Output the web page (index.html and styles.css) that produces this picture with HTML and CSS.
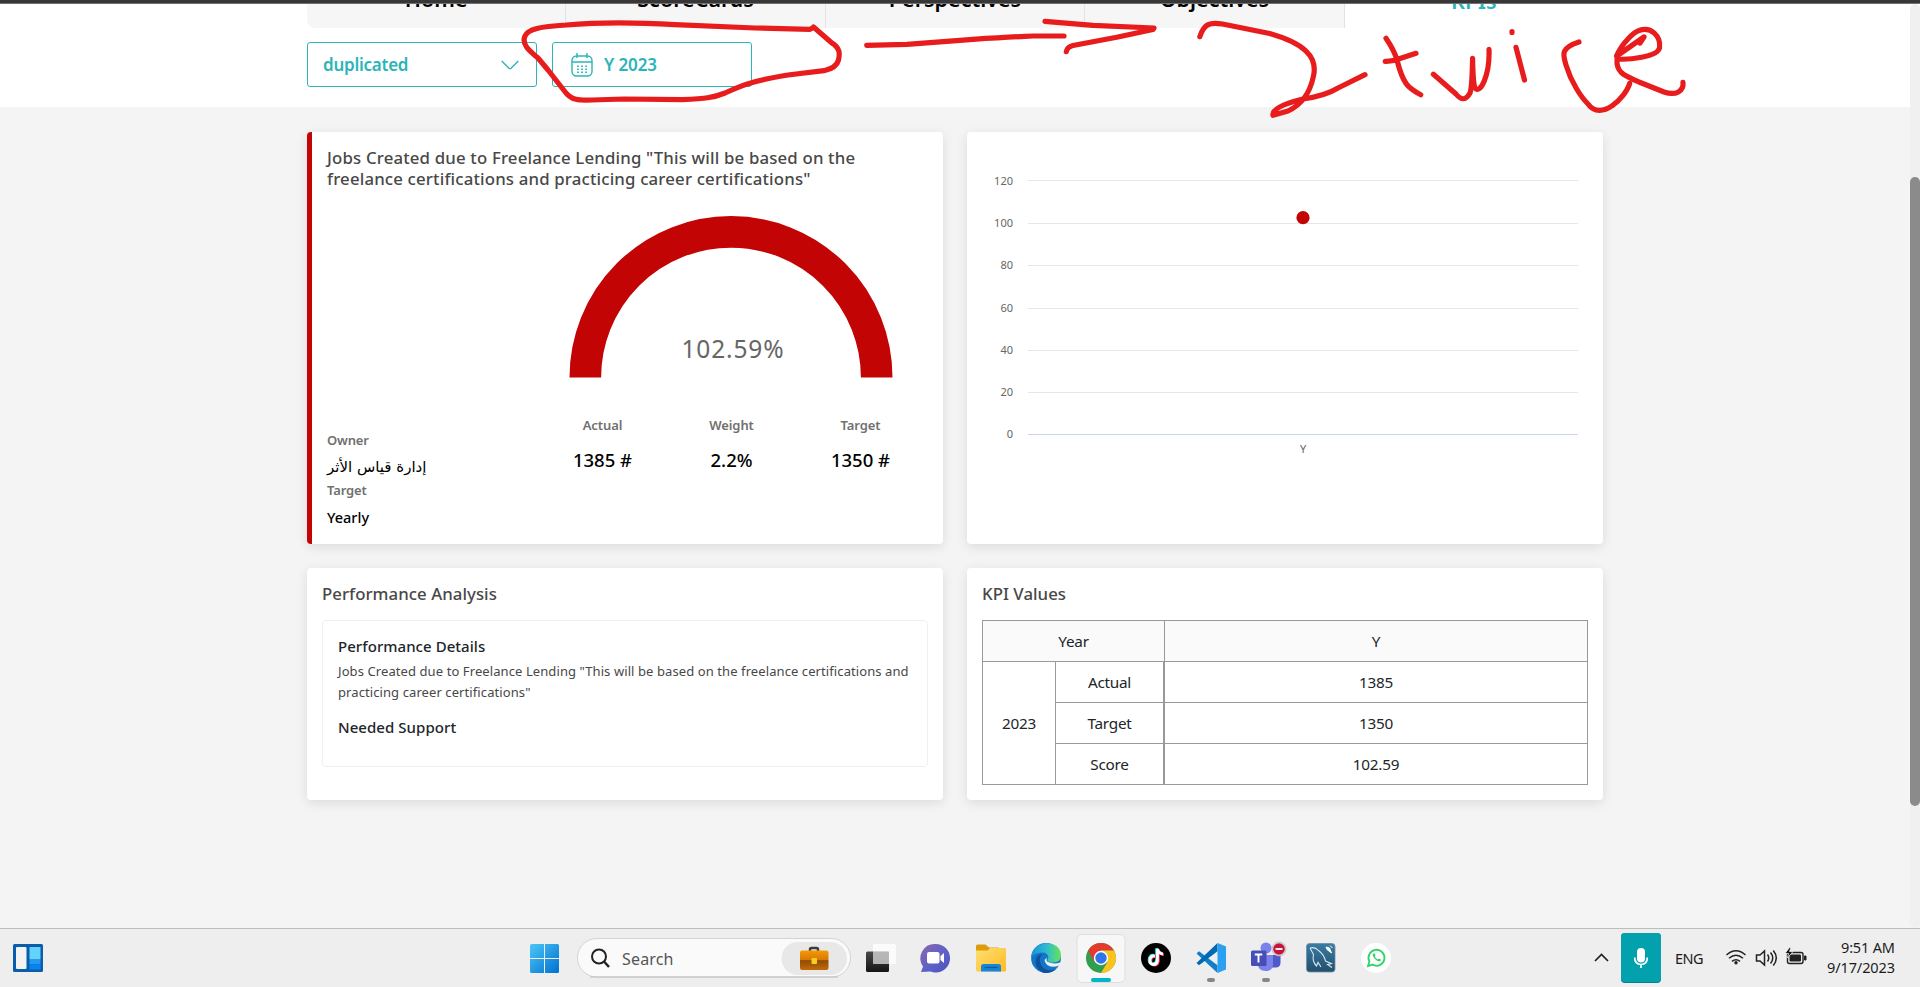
FILE: index.html
```
<!DOCTYPE html>
<html lang="en">
<head>
<meta charset="utf-8">
<title>KPIs</title>
<link rel="stylesheet" href="styles.css">
</head>
<body>
<div class="topbar"></div>
<header class="head">
  <nav class="tabs">
    <div class="tab"><span>Home</span></div>
    <div class="tab"><span>ScoreCards</span></div>
    <div class="tab"><span>Perspectives</span></div>
    <div class="tab"><span>Objectives</span></div>
    <div class="tab tab-on"><span>KPIs</span></div>
  </nav>
  <div class="filters">
    <div class="select"><span>duplicated</span>
      <svg width="18" height="10" viewBox="0 0 18 10" fill="none" stroke="#2cb5b9" stroke-width="1.4"><path d="M.7 1 8 8.2Q9 9 10 8.2L17.3 1"/></svg>
    </div>
    <div class="period">
      <svg width="22" height="24" viewBox="0 0 22 24" fill="none" stroke="#2cb5b9" stroke-width="1.4"><rect x="1" y="3" width="20" height="20" rx="4.5"/><path d="M1 9h20M6 0v5M16 0v5" /><path d="M6 13.2h10M6 16.2h10M6 19.2h10" stroke-width="1.6" stroke-dasharray="1.8 2.3"/></svg>
      <span>Y 2023</span>
    </div>
  </div>
</header>

<main class="grid">
  <section class="card kpi">
    <h2 class="title title-long">Jobs Created due to Freelance Lending "This will be based on the<br>freelance certifications and practicing career certifications"</h2>
    <div class="kpi-body">
      <dl class="meta">
        <dt>Owner</dt><dd class="ar" dir="rtl">إدارة قياس الأثر</dd>
        <dt>Target</dt><dd>Yearly</dd>
      </dl>
      <div class="score">
        <svg class="gauge" width="324" height="162" viewBox="0 0 324 162"><path d="M16.3 161.500A145.7 145.7 0 0 1 307.700 161.500" fill="none" stroke="#c30404" stroke-width="31.600"/><text x="163.500" y="141.500" text-anchor="middle" textLength="102" lengthAdjust="spacing" class="pct">102.59%</text></svg>
        <div class="stats">
          <div class="stat"><span>Actual</span><b>1385 #</b></div>
          <div class="stat"><span>Weight</span><b>2.2%</b></div>
          <div class="stat"><span>Target</span><b>1350 #</b></div>
        </div>
      </div>
    </div>
  </section>

  <section class="card">
    <svg class="chart" width="636" height="412" viewBox="0 0 636 412">
      <g stroke="#e6e6e6"><path d="M61 48.500H611M61 91.500H611M61 133.500H611M61 176.500H611M61 218.500H611M61 260.500H611"/></g>
      <path d="M61 302.500H611" stroke="#ccd6eb"/>
      <g class="axis" text-anchor="end">
        <text x="46" y="53">120</text><text x="46" y="95">100</text><text x="46" y="137">80</text><text x="46" y="180">60</text><text x="46" y="222">40</text><text x="46" y="264">20</text><text x="46" y="306">0</text>
      </g>
      <text class="axis" x="336" y="321" text-anchor="middle">Y</text>
      <circle cx="336" cy="85.700" r="6.600" fill="#c30404"/>
    </svg>
  </section>

  <section class="card panel">
    <h2 class="title">Performance Analysis</h2>
    <div class="box">
      <h3>Performance Details</h3>
      <p>Jobs Created due to Freelance Lending "This will be based on the freelance certifications and<br>practicing career certifications"</p>
      <h3>Needed Support</h3>
    </div>
  </section>

  <section class="card panel">
    <h2 class="title">KPI Values</h2>
    <div class="table">
      <div class="cell th year">Year</div><div class="cell th">Y</div>
      <div class="cell y23">2023</div>
      <div class="cell thick">Actual</div><div class="cell">1385</div>
      <div class="cell thick">Target</div><div class="cell">1350</div>
      <div class="cell thick">Score</div><div class="cell">102.59</div>
    </div>
  </section>
</main>

<div class="track"><div class="thumb"></div></div>

<svg class="ink" width="1920" height="130" viewBox="0 0 1920 130" fill="none" stroke="#e81c1c" stroke-width="5.200" stroke-linecap="round" stroke-linejoin="round">
  <path d="M813.500 27.500 810 29.300 755 28 675 24.700C640 22.500 600 22 566 25 540 26.500 528 29 525 36 521 45 531 52 538 58L548 70 566 93C572 100 578 100.500 592 100L624 99 682 99.700C705 98.500 713 98 725 93 748 82 760 80 788 75L824 70.700C832 69 837 66 838.500 60 840 53 840 48 831.600 42.700L813.500 27"/>
  <path d="M866.700 45.300 907 44.300 973 39.300Q1010 37 1033 36H1064"/>
  <path d="M1045 21.300 1093 25.300 1154 28 1153 29.500 1116.700 37.300 1073 45.500Q1067 47 1066.300 51.700"/>
  <path d="M1199.800 36.700C1204 24 1209 22 1222.500 24L1269.700 33.500C1303 43 1318 56 1313.500 76 1310 93 1301 105 1288 111L1273 115.300Q1271 107 1302.700 99 1325 96 1338 88L1365 74.700"/>
  <path d="M1386 38.300Q1394 50 1397 60C1403 84 1408 88 1420.700 94.700M1385.300 61.300Q1393 61.500 1400 58.500L1416 53.300"/>
  <path d="M1433.400 74.300 1456 94Q1464 104 1470 93 1472 88 1472.600 58.300 1473 83 1475 88C1480 95 1490 75 1489 49.300M1516 47.300 1524.500 80M1512 31.600v.800"/>
  <path d="M1579 42C1560 48 1563 55 1566 65 1571 82 1581 97 1588 104 1601 122 1626 97 1629.700 83.300"/>
  <path d="M1640 43 1644 37 1621 53 1616.500 56C1622 43 1634 32 1639 30.500 1651 26 1661 36 1659.500 48 1657.500 57 1628 60 1617 59 1616 72 1623 75 1639 82L1664 92C1676 96 1684 91 1683 82.300"/>
</svg>

<footer class="taskbar">
  <svg width="1920" height="59" viewBox="0 929 1920 59">
    <defs>
      <linearGradient id="win" x1="0" y1="0" x2="1" y2="1"><stop offset="0" stop-color="#4cc7f7"/><stop offset="1" stop-color="#0070cf"/></linearGradient>
      <linearGradient id="dark" x1="0" y1="0" x2="0" y2="1"><stop offset="0" stop-color="#4a4a4a"/><stop offset="1" stop-color="#151515"/></linearGradient>
      <linearGradient id="chat" x1="0" y1="0" x2="1" y2="1"><stop offset="0" stop-color="#8a68ae"/><stop offset=".6" stop-color="#5b5fc9"/><stop offset="1" stop-color="#4f52b8"/></linearGradient>
      <linearGradient id="fold" x1="0" y1="0" x2="1" y2="1"><stop offset="0" stop-color="#ffdf74"/><stop offset="1" stop-color="#fdbb22"/></linearGradient>
      <linearGradient id="edge" x1="0" y1="0" x2="1" y2="0"><stop offset="0" stop-color="#1692d8"/><stop offset=".5" stop-color="#2dbbd0"/><stop offset="1" stop-color="#67e45a"/></linearGradient>
      <linearGradient id="case" x1="0" y1="0" x2="0" y2="1"><stop offset="0" stop-color="#f39a08"/><stop offset=".48" stop-color="#d97803"/><stop offset=".52" stop-color="#8f4b05"/><stop offset="1" stop-color="#c46a08"/></linearGradient>
      <linearGradient id="sql" x1="0" y1="0" x2="0" y2="1"><stop offset="0" stop-color="#3a7ca5"/><stop offset="1" stop-color="#234f6b"/></linearGradient>
    </defs>
    <!-- widgets -->
    <rect x="13" y="944" width="30" height="28" rx="1.500" fill="#0b5cab"/><rect x="16" y="947" width="10.500" height="22" rx="1" fill="#f3f3f3"/><rect x="29.500" y="947" width="11" height="12.500" fill="#63d3fb"/><rect x="29.500" y="960" width="11" height="4.500" fill="#2299f2"/><rect x="29.500" y="965" width="11" height="4.500" fill="#0583f0"/>
    <!-- start -->
    <path fill="url(#win)" d="M531.500 944H544v14h-14v-12.500q0-1.500 1.500-1.500ZM545 944h12.500q1.500 0 1.500 1.500V958h-14ZM530 959h14v14h-12.500q-1.500 0-1.500-1.500ZM545 959h14v12.500q0 1.500-1.500 1.500H545Z"/>
    <!-- search -->
    <rect x="577.500" y="938.500" width="273" height="38.500" rx="19.200" fill="#fafafa" stroke="#d4d4d4"/><path d="M590 977h248" stroke="#bdbdbd"/>
    <circle cx="599" cy="956.500" r="7" fill="none" stroke="#222" stroke-width="2"/><path d="m604 961.500 5 5.500" stroke="#222" stroke-width="2.500"/>
    <text x="622" y="965" class="tb-search" textLength="51.500">Search</text>
    <rect x="781.500" y="942" width="65.500" height="33" rx="16.500" fill="#e8e8e8"/>
    <path d="M810 951v-1.500q0-1.500 1.500-1.500h5q1.500 0 1.500 1.500v1.500" fill="none" stroke="#3d3a3a" stroke-width="2.500"/><rect x="800" y="950.500" width="28.500" height="19.500" rx="2" fill="url(#case)"/><rect x="811.500" y="958" width="5.500" height="6" rx="1" fill="#f4cf20"/>
    <!-- task view -->
    <rect x="866" y="951.500" width="23" height="20.500" rx="1.500" fill="url(#dark)"/><rect x="873" y="944" width="23" height="20" rx="1.500" fill="#fff" fill-opacity=".78"/><rect x="873" y="951.500" width="16" height="12.500" fill="#aaa" fill-opacity=".7"/>
    <!-- chat -->
    <path d="M935.500 944a14.300 14.300 0 1 1-5 27.600L921 972l2-5.500A14.300 14.300 0 0 1 935.500 944Z" fill="url(#chat)"/><rect x="927" y="952" width="12.500" height="11.500" rx="2" fill="#fff"/><path d="m940.500 956 3.500-3v10l-3.500-3Z" fill="#fff"/>
    <!-- folder -->
    <path d="M976 946q0-1.500 1.500-1.500h8l3.500 3h9q1.500 0 1.500 1.500v5H976Z" fill="#dc9c0c"/><path d="M976 950.500h11.500l3-2.500h14q1.500 0 1.500 1.500v20.500q0 1.500-1.500 1.500h-27q-1.500 0-1.500-1.500Z" fill="url(#fold)"/><path d="M981 971.500v-5q0-2.500 2.500-2.500h15q2.500 0 2.500 2.500v5Z" fill="#1784dc"/><path d="M984.500 967.500h13" stroke="#0d5aa7" stroke-width="1.300"/>
    <!-- edge -->
    <circle cx="1046" cy="958" r="14.900" fill="#1275c8"/><path d="M1031.200 956.500C1034 938 1061 940 1061 955q0 7.500-8 7.500c-4.500 0-6.500-1.500-5-4 1.500-3-2-6.500-6-6q-7 .500-10.800 4Z" fill="url(#edge)"/><path d="M1042 954q-4.500 6 0 12.500 5 6 14.500 2.500Q1049 975 1042 972.200 1034 967 1036 959 1037.500 954.500 1042 954Z" fill="#11509c"/><path d="M1047 957.500q-1.500 3 1 4.500 5.500 2.500 12 .500 1 1.500-.500 3-13 4-15-5.500Z" fill="#eee"/>
    <!-- chrome -->
    <rect x="1077" y="934.500" width="48" height="48" rx="5" fill="#f7f7f7" stroke="#dedede"/>
    <circle cx="1101" cy="958" r="15" fill="#2f9e4f"/><path d="M1088 950.500A15 15 0 0 1 1114 950.500H1101L1094.500 962Z" fill="#e33b2e"/><path d="M1114 950.500A15 15 0 0 1 1101 973L1107.500 962 1101 950.500Z" fill="#fcc31e"/><circle cx="1101" cy="958" r="7.200" fill="#fff"/><circle cx="1101" cy="958" r="5.700" fill="#2f74ea"/>
    <rect x="1091" y="978" width="20" height="4" rx="2" fill="#00b5c8"/>
    <!-- tiktok -->
    <circle cx="1156" cy="958" r="15" fill="#000"/><g fill="none" stroke-width="2.800"><path d="M1155 956q-5-.500-5 4.500 0 4 3.500 4t4-4V949q1 4.500 5.500 5" stroke="#25f4ee" transform="translate(-.9 -.7)"/><path d="M1155 956q-5-.500-5 4.500 0 4 3.500 4t4-4V949q1 4.500 5.500 5" stroke="#fe2c55" transform="translate(.9 .7)"/><path d="M1155 956q-5-.500-5 4.500 0 4 3.500 4t4-4V949q1 4.500 5.500 5" stroke="#fff"/></g>
    <!-- vs code -->
    <path d="m1196.500 953.500 2.500-2.200 18.500 14V973Z" fill="#0f7fca"/><path d="m1196.500 963 2.500 2.200 18.500-14V943Z" fill="#0069b3"/><path d="M1217.500 943l8.500 3.500v23l-8.500 3.500Z" fill="#2b9ff2"/>
    <rect x="1207" y="978" width="8" height="4" rx="2" fill="#868686"/>
    <!-- teams -->
    <circle cx="1266" cy="948" r="5.500" fill="#7b83eb"/><circle cx="1277" cy="950" r="3.500" fill="#5059c9"/><path d="M1270 955h10.500v7.500q0 5-5 5H1270Z" fill="#5059c9"/><path d="M1258 955h15v9q0 7-7.500 7t-7.500-7Z" fill="#7b83eb"/><rect x="1251" y="950.500" width="15.500" height="15.500" rx="1.500" fill="#464eb8"/><path d="M1254.800 954.500h7.500M1258.500 954.500v8" stroke="#fff" stroke-width="1.900"/>
    <circle cx="1279" cy="949" r="7" fill="#ddd" stroke="#aaa" stroke-width=".6"/><circle cx="1279" cy="949" r="5.800" fill="#c4163a"/><path d="M1275.500 949h7" stroke="#fff" stroke-width="1.800"/>
    <rect x="1262" y="978" width="8" height="4" rx="2" fill="#868686"/>
    <!-- mysql workbench -->
    <rect x="1306.500" y="943.500" width="28.500" height="28.500" rx="3" fill="url(#sql)" stroke="#6a91a8" stroke-width=".8"/><path d="M1310 948q5-1.500 8.500 2.500c4 3 6 6 7 10.500l6 2.500-4 1 4.500 3M1310 948l3.500 6.500q-1.500 7 3 11.500l1.500-3.500 3 4.500" fill="none" stroke="#d8e6ee" stroke-width="1.100"/><path d="m1326 947 3.500 1 2 5-4.500-3.500ZM1330 945.500l2.500 2.500" fill="#fff" stroke="#fff"/>
    <!-- whatsapp -->
    <circle cx="1376" cy="958" r="15" fill="#fff"/><path d="m1368 966 1.400-4.600a8 8 0 1 1 3 3.200Z" fill="none" stroke="#2dd366" stroke-width="1.800"/><path d="M1373 953.500q-1 2 1.500 5t5.500 2.700q1.300-1 .500-2l-1.500-.800-1.200 1q-2.200-.800-3-2.900l.700-1-.7-1.800Z" fill="#2dd366"/>
    <!-- tray -->
    <path d="m1595 961 6.500-6.500 6.500 6.500" fill="none" stroke="#222" stroke-width="1.700"/>
    <rect x="1621" y="933" width="40" height="50" rx="4" fill="#02808c"/><rect x="1621" y="933" width="40" height="49" rx="4" fill="#03a0ae"/><rect x="1637" y="948" width="8" height="14.500" rx="4" fill="#fff"/><path d="M1634.700 957.500q0 7 6.300 7t6.300-7M1641 964.500v3.500" fill="none" stroke="#fff" stroke-width="1.700"/>
    <text x="1675" y="964" class="tb" textLength="28.500">ENG</text>
    <g fill="none" stroke="#222" stroke-width="1.500"><path d="M1726.500 955q9.500-8.500 19 0M1729 958.200q7-6 14 0M1732 961.300q4-3.200 8 0"/><path d="M1756.500 955v6h3.500l4.500 4v-14l-4.500 4ZM1767.500 954.500q2.500 3.500 0 7M1770.500 952.500q4.500 5.500 0 11M1773.300 950.500q6 7.500 0 15"/></g><circle cx="1736" cy="962.800" r="1.700" fill="#222"/>
    <rect x="1787.500" y="952.500" width="15.500" height="11" rx="2" fill="none" stroke="#222" stroke-width="1.400"/><rect x="1789.500" y="954.500" width="11.500" height="7" rx="1" fill="#222"/><path d="M1804.500 956h1.500v4h-1.500Z" fill="#222" stroke="#222"/><path d="m1789.500 947.500-4.500 6h3.500l-1 4.500 5.500-6.500h-3.500l1.500-4Z" fill="#111" stroke="#eee" stroke-width=".8"/>
    <text x="1841" y="953" class="tb" textLength="54">9:51 AM</text>
    <text x="1827" y="973" class="tb" textLength="68">9/17/2023</text>
  </svg>
</footer>
</body>
</html>
```
FILE: styles.css
```
* { box-sizing: border-box; }
body {
  margin: 0;
  height: 987px;
  overflow: hidden;
  display: flex;
  flex-direction: column;
  background: #f4f4f4;
  font-family: "Noto Sans", "Open Sans", sans-serif;
  color: #212529;
}
h2, h3, p, dl, dd { margin: 0; }
.topbar { height: 4px; flex: none; background: #383637; border-bottom: 1px solid #707070; position: relative; z-index: 2; }
.head { height: 103px; flex: none; background: #fff; }
.tabs { width: 1296px; height: 24px; margin-left: 307px; display: flex; overflow: hidden; border-radius: 0 0 0 8px; }
.tab {
  flex: 1;
  background: #f6f6f6;
  border-right: 1px solid #e3e3e3;
  text-align: center;
  font-size: 21.500px;
  font-weight: 600;
  line-height: 30px;
  color: #000;
}
.tab span { display: block; margin: -20px 0 0 0; }
.tab-on { background: #fff; border: 0; color: #2cb5b9; }
.tab-on span { margin-top: -18px; }
.filters { display: flex; gap: 15px; margin: 14px 0 0 307px; color: #2cb5b9; font-size: 17px; font-weight: 600; }
.select, .period { height: 45px; border: 1px solid #2cb5b9; border-radius: 3px; display: flex; align-items: center; }
.select { width: 230px; justify-content: space-between; padding: 0 17px 0 15px; letter-spacing: -.25px; }
.period { width: 200px; padding-left: 18px; gap: 11px; letter-spacing: -.1px; }

.grid { display: grid; grid-template-columns: 636px 636px; grid-template-rows: 412px 232px; gap: 24px; padding: 25px 0 0 307px; flex: 1; align-content: start; }
.card { background: #fff; border-radius: 4px; box-shadow: 0 3px 12px rgba(0, 0, 0, .1); overflow: hidden; }
.title { font-size: 16.800px; font-weight: 500; line-height: 21px; color: #484848; white-space: nowrap; margin-top: -1px; letter-spacing: .05px; }
.title-long { letter-spacing: .17px; }
.kpi { border-left: 5px solid #c30404; padding: 16px 0 0 15px; }
.kpi-body { display: flex; }
.meta { width: 242px; padding-top: 241px; font-size: 14.500px; }
.meta dt { font-size: 13px; line-height: 20px; color: #707070; font-weight: 600; letter-spacing: -.15px; }
.meta dd { line-height: 34px; height: 30px; color: #000; font-weight: 500; letter-spacing: 0; }
.meta .ar { text-align: left; font-family: "DejaVu Sans", sans-serif; font-size: 15px; letter-spacing: 0; line-height: 35px; width: 100px; white-space: nowrap; }
.meta dt, .score, .stats { white-space: nowrap; }
.score { padding-top: 27px; }
.gauge { display: block; }
.pct { font-size: 24.500px; fill: #666; }
.stats { display: flex; width: 387px; margin: 35px 0 0 -31px; }
.stat { flex: 1; text-align: center; }
.stat span { display: block; font-size: 13px; line-height: 24px; font-weight: 600; color: #707070; letter-spacing: -.1px; }
.stat b { display: block; font-size: 18.500px; line-height: 28px; margin-top: 9px; font-weight: 500; color: #000; }
.axis { font-size: 11px; fill: #666; }
.chart { display: block; }

.panel { padding: 16px 15px; }
.box { height: 147px; margin-top: 16px; border: 1px solid #efefef; border-radius: 4px; padding: 14px 15px; }
.box h3 { font-size: 15px; font-weight: 500; line-height: 22px; white-space: nowrap; letter-spacing: .05px; }
.box p { font-size: 13px; line-height: 21px; color: #484848; white-space: nowrap; margin: 4px 0 13px; letter-spacing: .09px; }
.table { display: grid; grid-template-columns: 73px 109px 1fr; grid-template-rows: repeat(4, 41px); margin-top: 16px; border-left: 1px solid #999; border-top: 1px solid #999; }
.cell { border-right: 1px solid #999; border-bottom: 1px solid #999; display: flex; align-items: center; justify-content: center; font-size: 15.300px; letter-spacing: -.25px; }
.th { background: #fafafa; }
.year { grid-column: span 2; }
.y23 { grid-row: span 3; }
.thick { border-right-width: 2px; }

.track { position: absolute; top: 4px; right: 0; width: 10px; height: 924px; background: #f0f0f0; border-radius: 5px; padding-top: 173px; }
.thumb { height: 629px; background: #8b8b8b; border-radius: 5px; }
.ink { position: absolute; left: 0; top: 0; }
.taskbar { height: 59px; flex: none; background: #eee; border-top: 1px solid #bdbdbd; }
.taskbar svg { display: block; }
.tb { font-size: 14.500px; fill: #1c1c1c; }
.tb-search { font-size: 16px; fill: #555; }
```
